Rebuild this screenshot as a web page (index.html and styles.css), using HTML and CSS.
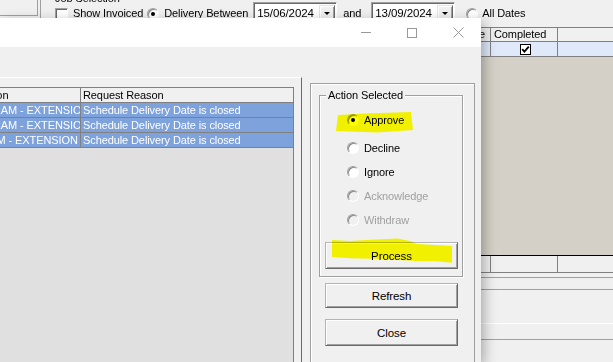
FILE: index.html
```html
<!doctype html>
<html lang="en">
<head>
	<meta charset="UTF-8">
	<title>Request Approval</title>

	<link rel="stylesheet" href="styles.css">
</head>
<body>

	<!-- main window behind the dialog -->
	<div class="app">
		<div class="app-top">
			<div class="side"></div>
			<div class="side2"></div>
			<div class="job">
				<div class="job-legend">Job Selection</div>
				<div class="filter-row">
					<span class="chk"></span>
					<span class="lbl lbl-inv">Show Invoiced</span>
					<span class="radio on r-between"></span>
					<span class="lbl lbl-between">Delivery Between</span>
					<div class="date d-from"><span>15/06/2024</span><span class="dd"></span></div>
					<span class="lbl lbl-and">and</span>
					<div class="date d-to"><span>13/09/2024</span><span class="dd"></span></div>
					<span class="radio r-all"></span>
					<span class="lbl lbl-all">All Dates</span>
				</div>
			</div>
		</div>

		<div class="app-grid">
			<div class="grid-head">
				<div class="g g1">Date</div>
				<div class="g g2">Completed</div>
				<div class="g g3"></div>
			</div>
			<div class="grid-row">
				<div class="g g1"></div>
				<div class="g g2">
					<span class="tick"><svg width="9" height="9" viewBox="0 0 9 9"><polyline points="1.2,4.2 3.4,6.6 7.8,1.6" fill="none" stroke="#000" stroke-width="1.8"/></svg></span>
				</div>
				<div class="g g3"></div>
			</div>
			<div class="grid-empty"></div>
			<div class="grid-total">
				<div class="g g1"></div>
				<div class="g g2"></div>
				<div class="g g3"></div>
			</div>
		</div>

		<div class="app-foot">
			<div class="foot-a"></div>
			<div class="foot-b"></div>
			<div class="foot-c"></div>
		</div>
	</div>

	<!-- dialog window -->
	<div class="dialog">
		<div class="titlebar">
			<div class="cap"><svg width="10" height="1"><path d="M0 .5h10" stroke="#999"/></svg></div>
			<div class="cap"><svg width="10" height="10"><rect x=".5" y=".5" width="9" height="9" fill="none" stroke="#999"/></svg></div>
			<div class="cap"><svg width="11" height="11"><path d="M.5 .5l10 10M10.5 .5l-10 10" stroke="#999"/></svg></div>
		</div>

		<div class="dlg-body">
			<div class="list-frame">
				<div class="list">
					<div class="list-row head">
						<div class="cell c-op">Operation</div>
						<div class="cell c-reason">Request Reason</div>
					</div>
					<div class="list-row sel">
						<div class="cell c-op">PROGRAM - EXTENSION</div>
						<div class="cell c-reason">Schedule Delivery Date is closed</div>
					</div>
					<div class="list-row sel">
						<div class="cell c-op">PROGRAM - EXTENSION</div>
						<div class="cell c-reason">Schedule Delivery Date is closed</div>
					</div>
					<div class="list-row sel">
						<div class="cell c-op">SYSTEM - EXTENSION</div>
						<div class="cell c-reason">Schedule Delivery Date is closed</div>
					</div>
				</div>
			</div>

			<div class="action-panel">
				<div class="group">
					<div class="group-title">Action Selected</div>

					<div class="opt first">
						<span class="radio on"></span><span>Approve</span>
						<svg class="marker mark-approve" width="78" height="21" viewBox="0 0 78 21"><path d="M3 3 L30 1.5 L76 0 L78 18 L42 20.5 L1 19 Z" fill="#ff0"/></svg>
					</div>
					<div class="opt"><span class="radio"></span><span>Decline</span></div>
					<div class="opt"><span class="radio"></span><span>Ignore</span></div>
					<div class="opt off"><span class="radio"></span><span>Acknowledge</span></div>
					<div class="opt off"><span class="radio"></span><span>Withdraw</span></div>

					<div class="btn process">
						<span>Process</span>
						<svg class="marker mark-process" width="120" height="25" viewBox="0 0 120 25"><path d="M0 2 L18 3 L35 2 L55 1 L65 .5 L78 3 L85 6 L120 8 L120 24.7 L101 23 L84 23 L51 21 L18 20.3 L0 19 Z" fill="#ff0"/></svg>
					</div>
				</div>

				<div class="btn refresh">Refresh</div>
				<div class="btn close">Close</div>
			</div>
		</div>
	</div>

</body>
</html>
```

FILE: styles.css
```css
body {
	margin: 0;
	background: #f0f0f0;
	font-family: "Liberation Sans", Arial, sans-serif;
	font-size: 11px;
	letter-spacing: -0.1px;
	color: #000;
	overflow: hidden;
}

/* ---------- main window ---------- */

.app {
	height: 362px;
	overflow: hidden;
}

.app-top {
	display: flex;
	height: 27px;
}

.side {
	width: 37px;
	height: 15px;
	border-right: 1px solid #a0a0a0;
	border-bottom: 1px solid #a0a0a0;
}

.side2 {
	width: 2px;
	height: 27px;
	border-right: 1px solid #a0a0a0;
}

.job {
	margin-left: 14px;
}

.job-legend {
	margin-top: -8px;
	height: 13px;
	line-height: 13px;
}

.filter-row {
	display: flex;
	align-items: center;
	height: 21px;
	margin-top: -3px;
}

.chk {
	width: 13px;
	height: 13px;
	box-sizing: border-box;
	margin-top: 3px;
	border: 1px solid;
	border-color: #a0a0a0 #fff #fff #a0a0a0;
	box-shadow: inset 1px 1px 0 #696969;
	background: #fff;
}

.lbl-inv { margin-left: 5px; }
.r-between { margin-left: 4px; margin-top: 2px; }
.lbl-between { margin-left: 5px; }
.d-from { margin-left: 5px; }
.lbl-and { margin-left: 6px; }
.d-to { margin-left: 10px; }
.r-all { margin-left: 11px; margin-top: 2px; }
.lbl-all { margin-left: 4px; }

.radio {
	position: relative;
	flex: none;
	width: 12px;
	height: 12px;
	box-sizing: border-box;
	border-radius: 50%;
	border: 1px solid;
	border-color: #a0a0a0 #fff #fff #a0a0a0;
	box-shadow: inset 1px 1px 0 #8a8a8a;
	background: #fff;
}

.radio.on::after {
	content: '';
	position: absolute;
	left: 3px;
	top: 3px;
	width: 4px;
	height: 4px;
	border-radius: 50%;
	background: #000;
}

.date {
	display: flex;
	align-items: center;
	width: 84px;
	height: 21px;
	box-sizing: border-box;
	padding-left: 3px;
	border: 1px solid;
	border-color: #a0a0a0 #fff #fff #a0a0a0;
	box-shadow: inset 1px 1px 0 #696969;
	background: #fff;
	font-size: 11.5px;
}

.dd {
	position: relative;
	width: 16px;
	height: 16px;
	box-sizing: border-box;
	margin: 0 1px 0 auto;
	border: 1px solid;
	border-color: #e3e3e3 #696969 #696969 #e3e3e3;
	box-shadow: inset 1px 1px 0 #fff, inset -1px -1px 0 #a0a0a0;
	background: #f0f0f0;
}

.dd::after {
	content: '';
	position: absolute;
	left: 4px;
	top: 6px;
	border-left: 3px solid transparent;
	border-right: 3px solid transparent;
	border-top: 3px solid #000;
}

/* grid on the right of the main window */
.app-grid {
	margin-left: 400px;
}

.grid-head,
.grid-row,
.grid-total {
	display: flex;
}

.grid-head {
	height: 13px;
	line-height: 13px;
	border-top: 1px solid #808080;
	border-bottom: 1px solid #808080;
}

.grid-row {
	height: 14px;
	border-bottom: 1px solid #808080;
	background: #dfe9fa;
}

.g {
	box-sizing: border-box;
	border-right: 1px solid #808080;
}

.g1 {
	width: 91px;
	padding-right: 5px;
	text-align: right;
}

.g2 {
	width: 67px;
	padding-left: 3px;
	display: flex;
	align-items: center;
	justify-content: center;
}

.grid-head .g2 {
	justify-content: flex-start;
}

.g3 {
	flex: 1;
	border-right: none;
}

.tick {
	display: flex;
	align-items: center;
	justify-content: center;
	width: 11px;
	height: 11px;
	box-sizing: border-box;
	border: 1px solid #000;
	background: #fff;
}

.grid-empty {
	height: 198px;
	background: #d4d0c8;
}

.grid-total {
	height: 16px;
	border-top: 1px solid #000;
	border-bottom: 1px solid #808080;
}

.app-foot {
	margin-top: 4px;
	border-top: 1px solid #a0a0a0;
}

.foot-a {
	height: 11px;
	border-bottom: 1px solid #a0a0a0;
}

.foot-b {
	height: 33px;
	border-bottom: 1px solid #fff;
}

.foot-c {
	height: 15px;
	border-bottom: 1px solid #a0a0a0;
}

/* ---------- dialog ---------- */

.dialog {
	position: absolute;
	left: 0;
	top: 18px;
	width: 481px;
	height: 344px;
	overflow: hidden;
	background: #f0f0f0;
	box-shadow: 3px 4px 12px rgba(0, 0, 0, 0.3);
}

.titlebar {
	display: flex;
	justify-content: flex-end;
	height: 29px;
	background: #fff;
}

.cap {
	display: flex;
	align-items: center;
	justify-content: center;
	width: 46px;
}

.dlg-body {
	display: flex;
	align-items: flex-start;
	padding-top: 30px;
}

.list-frame {
	width: 344px;
	height: 300px;
	box-sizing: border-box;
	margin-left: -42px;
	padding: 9px 7px 0 0;
	border-top: 1px solid #fff;
	border-right: 1px solid #696969;
}

.list {
	height: 300px;
	border: 1px solid #808080;
	background: #e0e0e0;
}

.list-row {
	display: flex;
	height: 14px;
	line-height: 14px;
	border-bottom: 1px solid #808080;
}

.list-row.head {
	background: #f0f0f0;
}

.list-row.sel {
	background: #7ea2dc;
	color: #fff;
}

.cell {
	padding-left: 2px;
	white-space: nowrap;
	overflow: hidden;
	box-sizing: border-box;
}

.c-op {
	width: 122px;
	border-right: 1px solid #808080;
}

.c-reason {
	flex: 1;
}

.action-panel {
	width: 165px;
	height: 300px;
	box-sizing: border-box;
	margin: 6px 0 0 8px;
	padding: 11px 0 0 8px;
	border: 1px solid #a0a0a0;
	box-shadow: inset 1px 1px 0 #fff;
}

.group {
	width: 144px;
	box-sizing: border-box;
	padding: 0 4px 7px 5px;
	border: 1px solid #a0a0a0;
	box-shadow: inset 1px 1px 0 #fff, 1px 1px 0 #fff;
}

.group-title {
	width: fit-content;
	margin: -7px 0 0 1px;
	padding: 0 2px;
	line-height: 13px;
	background: #f0f0f0;
}

.opt {
	position: relative;
	display: flex;
	align-items: center;
	gap: 5px;
	height: 24px;
	padding-left: 22px;
}

.opt.first {
	margin-top: 6px;
	margin-bottom: 4px;
}

.opt.off {
	color: #a0a0a0;
}

.opt.off .radio {
	background: #f0f0f0;
}

.marker {
	position: absolute;
	mix-blend-mode: multiply;
}

.mark-approve {
	left: 10px;
	top: 4px;
}

.mark-process {
	left: 6px;
	top: -5px;
}

.btn {
	position: relative;
	display: flex;
	align-items: center;
	justify-content: center;
	width: 133px;
	box-sizing: border-box;
	border: 1px solid;
	border-color: #b4b4b4 #696969 #696969 #b4b4b4;
	box-shadow: inset 1px 1px 0 #fff, inset -1px -1px 0 #a0a0a0;
	background: #f0f0f0;
	font-size: 11.5px;
}

.btn.process {
	height: 27px;
	margin-top: 10px;
}

.btn.refresh {
	height: 25px;
	margin: 6px 0 0 6px;
}

.btn.close {
	height: 27px;
	margin: 11px 0 0 6px;
}
```
